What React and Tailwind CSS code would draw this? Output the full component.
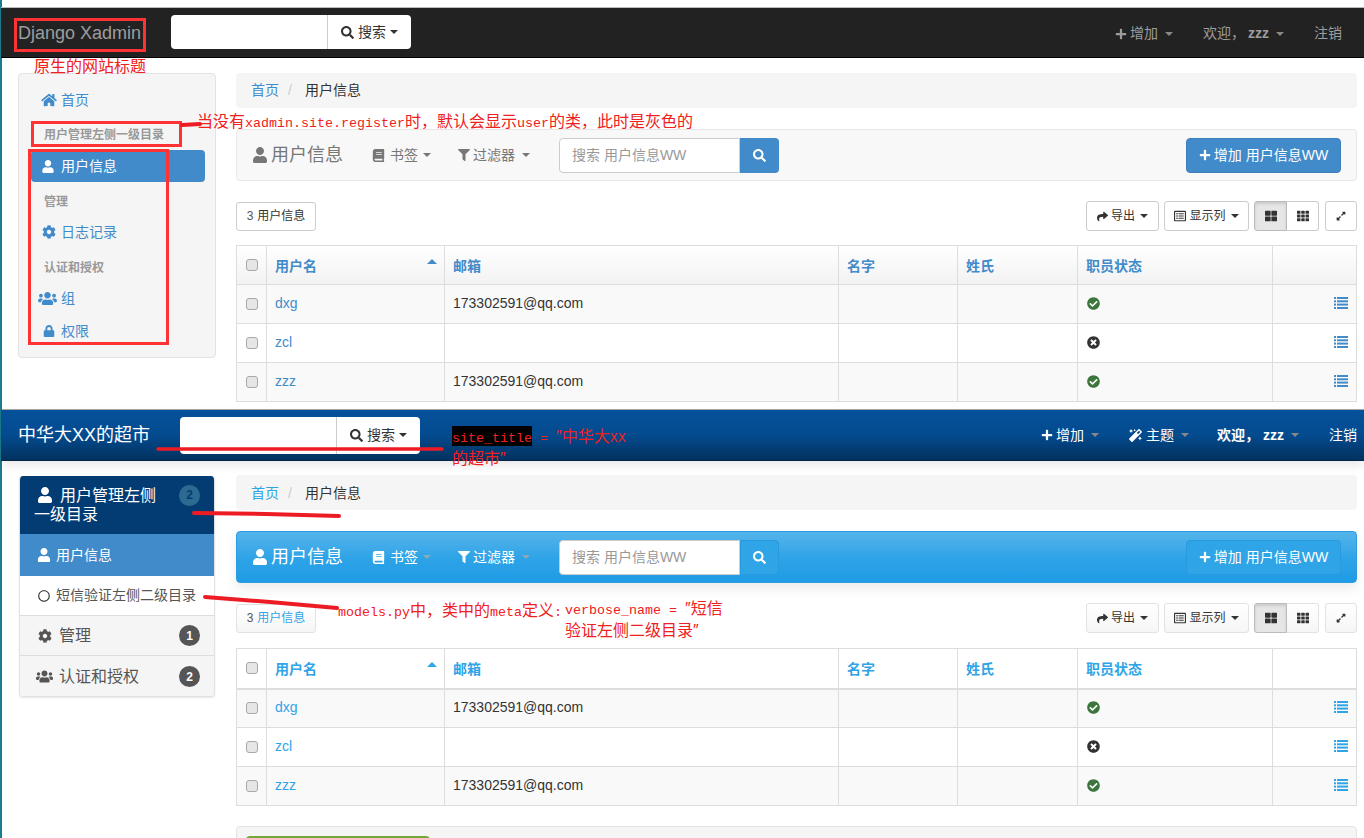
import React from "react";
import {
  FaHome,
  FaUser,
  FaCog,
  FaUsers,
  FaLock,
  FaBook,
  FaFilter,
  FaSearch,
  FaPlus,
  FaShare,
  FaRegListAlt,
  FaThLarge,
  FaTh,
  FaExpandAlt,
  FaCheckCircle,
  FaTimesCircle,
  FaMagic,
  FaRegCircle,
} from "react-icons/fa";

const rows = [
  { name: "dxg", email: "173302591@qq.com", staff: true },
  { name: "zcl", email: "", staff: false },
  { name: "zzz", email: "173302591@qq.com", staff: true },
];

const Caret = ({ className = "border-t-current" }) => (
  <span
    className={`inline-block w-0 h-0 ml-1 align-middle border-x-4 border-t-4 border-x-transparent ${className}`}
  />
);

const Checkbox = () => (
  <span className="block mx-auto w-[12px] h-[12px] rounded-[3px] border border-[#a8a8a8] bg-[#e6e6e6]" />
);

// font awesome 4 list icon, four rows
const ListIcon = () => (
  <svg className="ml-auto" width="14" height="12" viewBox="0 0 14 12" fill="currentColor">
    <rect x="0" y="0" width="2" height="2" />
    <rect x="3" y="0" width="11" height="2" />
    <rect x="0" y="3.3" width="2" height="2" />
    <rect x="3" y="3.3" width="11" height="2" />
    <rect x="0" y="6.6" width="2" height="2" />
    <rect x="3" y="6.6" width="11" height="2" />
    <rect x="0" y="10" width="2" height="2" />
    <rect x="3" y="10" width="11" height="2" />
  </svg>
);

const OutlineBtn = ({ className = "", children, soft }) => (
  <span
    className={`flex items-center justify-center h-[30px] border rounded-[3px] text-[12px] text-[#333] ${
      soft ? "border-[#e2e2e2] bg-linear-to-b from-white to-[#f6f6f6]" : "border-[#ccc] bg-white"
    } ${className}`}
  >
    {children}
  </span>
);

const SearchBox = ({ className }) => (
  <div className={`flex bg-white rounded-[4px] overflow-hidden w-[240px] ${className}`}>
    <div className="w-[157px] border-r border-[#ccc]" />
    <div className="flex-1 flex items-center justify-center gap-1 text-[14px] text-[#333]">
      <FaSearch className="text-[13px]" />
      搜索
      <Caret className="border-t-[#333] !ml-0" />
    </div>
  </div>
);

const NavItem = ({ className, caret, children }) => (
  <span className={`flex items-center gap-[3px] text-[14px] ${className}`}>
    {children}
    {caret && <Caret className="border-t-[#888] ml-[4px]" />}
  </span>
);

const Breadcrumb = ({ linkClass, className = "" }) => (
  <div className={`h-[35px] bg-[#f5f5f5] rounded-[4px] flex items-center px-[15px] text-[14px] ${className}`}>
    <span className={linkClass}>首页</span>
    <span className="text-[#ccc] mx-[9px]">/</span>
    <span className="text-[#333] ml-[4px]">用户信息</span>
  </div>
);

const Toolbar = ({ blue }) => {
  const title = blue ? "text-white" : "text-[#777]";
  const link = blue ? "text-white" : "text-[#777]";
  return (
    <div
      className={`h-[52px] flex items-center border rounded-[4px] pl-[15px] pr-[15px] ${
        blue
          ? "border-[#2d9be0] bg-linear-to-b from-[#54b4eb] via-[#2fa4e7] to-[#1d9ce5] shadow-[0_6px_12px_rgba(0,0,0,0.08)]"
          : "border-[#e7e7e7] bg-[#f8f8f8]"
      }`}
    >
      <span className={`flex items-center gap-[3px] text-[18px] w-[120px] ${title}`}>
        <FaUser className="text-[16px]" />
        用户信息
      </span>
      <span className={`flex items-center gap-[5px] text-[14px] w-[86px] ${link}`}>
        <FaBook className="text-[13px]" />
        书签
        <Caret className={blue ? "border-t-[#8aa9bd] !ml-0" : "border-t-[#777] !ml-0"} />
      </span>
      <span className={`flex items-center gap-[3px] text-[14px] w-[101px] ${link}`}>
        <FaFilter className="text-[12px]" />
        过滤器
        <Caret className={blue ? "border-t-[#8aa9bd]" : "border-t-[#777]"} />
      </span>
      <div className="flex h-[35px] w-[220px]">
        <div className="w-[181px] bg-white border border-[#ccc] rounded-l-[4px] flex items-center pl-[12px] text-[14px] text-[#999]">
          搜索 用户信息WW
        </div>
        <div
          className={`flex-1 flex items-center justify-center text-white text-[13px] rounded-r-[4px] ${
            blue ? "bg-[#2fa4e7] border border-[#2a9ade]" : "bg-[#428bca]"
          }`}
        >
          <FaSearch />
        </div>
      </div>
      <span
        className={`ml-auto w-[155px] h-[35px] flex items-center justify-center gap-[3px] text-white text-[14px] rounded-[4px] border ${
          blue ? "border-[#2a9ade] bg-[#2fa4e7]" : "border-[#3d80bb] bg-[#428bca]"
        }`}
      >
        <FaPlus className="text-[12px]" />
        增加 用户信息WW
      </span>
    </div>
  );
};

const ActionsRow = ({ soft, linkClass }) => (
  <div className="flex items-center h-[30px]">
    <OutlineBtn soft={soft} className="w-[80px] !h-[29px] gap-1">
      <span className="text-[#555]">3</span>
      <span className={linkClass}>用户信息</span>
    </OutlineBtn>
    <div className="ml-auto flex items-center">
      <OutlineBtn soft={soft} className="w-[73px] gap-[3px]">
        <FaShare className="text-[11px]" />
        导出
        <Caret className="border-t-[#333] !ml-[2px]" />
      </OutlineBtn>
      <OutlineBtn soft={soft} className="w-[85px] ml-[5px] gap-[3px]">
        <FaRegListAlt className="text-[12px]" />
        显示列
        <Caret className="border-t-[#333] !ml-[2px]" />
      </OutlineBtn>
      <div className="flex ml-[5px]">
        <span className="w-[33px] h-[30px] flex items-center justify-center border border-[#bbb] rounded-l-[3px] bg-[#e6e6e6] text-[#333] text-[12px] shadow-[inset_0_2px_3px_rgba(0,0,0,0.12)]">
          <FaThLarge />
        </span>
        <OutlineBtn soft={soft} className="w-[32px] !border-l-0 !rounded-l-none">
          <FaTh />
        </OutlineBtn>
      </div>
      <OutlineBtn soft={soft} className="w-[32px] ml-[6px]">
        <FaExpandAlt className="text-[10px]" />
      </OutlineBtn>
    </div>
  </div>
);

const DataTable = ({ linkClass, headClass, headBorder }) => (
  <table className="table-fixed w-[1121px] border border-[#ddd] text-[14px] text-[#333]">
    <colgroup>
      <col className="w-[30px]" />
      <col className="w-[178px]" />
      <col className="w-[394px]" />
      <col className="w-[119px]" />
      <col className="w-[120px]" />
      <col className="w-[195px]" />
      <col />
    </colgroup>
    <thead>
      <tr className={headClass}>
        <th className={`border border-[#ddd] ${headBorder}`}>
          <Checkbox />
        </th>
        <th className={`relative border border-[#ddd] text-left pl-[8px] pt-[2px] font-bold ${headBorder} ${linkClass}`}>
          用户名
          <span className="absolute right-[7px] top-[13px] w-0 h-0 border-x-[5px] border-b-[5px] border-x-transparent border-b-current" />
        </th>
        {["邮箱", "名字", "姓氏", "职员状态", ""].map((h, i) => (
          <th key={i} className={`border border-[#ddd] text-left pl-[8px] pt-[2px] font-bold ${headBorder} ${linkClass}`}>
            {h}
          </th>
        ))}
      </tr>
    </thead>
    <tbody>
      {rows.map((r, i) => (
        <tr key={r.name} className={`h-[39px] ${i % 2 === 0 ? "bg-[#f9f9f9]" : "bg-white"}`}>
          <td className="border border-[#ddd]">
            <Checkbox />
          </td>
          <td className={`border border-[#ddd] pl-[8px] pb-[2px] ${linkClass}`}>{r.name}</td>
          <td className="border border-[#ddd] pl-[8px] pb-[2px]">{r.email}</td>
          <td className="border border-[#ddd]" />
          <td className="border border-[#ddd]" />
          <td className="border border-[#ddd] pl-[9px] pb-[2px]">
            {r.staff ? (
              <FaCheckCircle className="text-[13px] text-[#3c763d]" />
            ) : (
              <FaTimesCircle className="text-[13px] text-[#333]" />
            )}
          </td>
          <td className={`border border-[#ddd] pr-[8px] pb-[2px] ${linkClass}`}>
            <ListIcon />
          </td>
        </tr>
      ))}
    </tbody>
  </table>
);

const PlainSidebar = () => {
  const link = "flex items-center text-[14px] text-[#428bca] pl-[22px]";
  const icon = "w-[16px] mr-[4px] text-[14px] shrink-0";
  const head = "flex items-center pl-[25px] text-[12px] font-bold text-[#999]";
  return (
    <aside className="w-[198px] h-[285px] bg-[#f5f5f5] border border-[#e3e3e3] rounded-[4px] pt-[11px]">
      <div className={`${link} h-[30px]`}>
        <FaHome className={icon} />
        首页
      </div>
      <div className={`${head} h-[20px] mt-[10px]`}>用户管理左侧一级目录</div>
      <div className="flex items-center ml-[12px] mt-[5px] w-[174px] h-[32px] bg-[#428bca] rounded-[4px] pl-[10px] text-white text-[14px]">
        <FaUser className="w-[14px] mr-[6px] text-[13px] shrink-0" />
        用户信息
      </div>
      <div className={`${head} h-[20px] mt-[10px]`}>管理</div>
      <div className={`${link} h-[30px] mt-[5px]`}>
        <FaCog className={icon} />
        日志记录
      </div>
      <div className={`${head} h-[20px] mt-[11px]`}>认证和授权</div>
      <div className={`${link} h-[30px] mt-[5px]`}>
        <FaUsers className="!w-[19px] !h-[15px] shrink-0 -ml-[3px] mr-[4px]" />
        组
      </div>
      <div className={`${link} h-[30px] mt-[3px]`}>
        <FaLock className="!w-[12px] !h-[12px] shrink-0 ml-[2px] mr-[6px]" />
        权限
      </div>
    </aside>
  );
};

const Badge = ({ className, children }) => (
  <span
    className={`absolute right-[14px] w-[21px] h-[21px] rounded-full flex items-center justify-center text-[12px] font-bold ${className}`}
  >
    {children}
  </span>
);

const MenuSidebar = () => (
  <aside className="w-[196px] ml-[1px] mt-[1px] h-[221px] rounded-[4px] overflow-hidden border border-[#e2e2e2] border-t-0 shadow-[0_1px_2px_rgba(0,0,0,0.1)]">
    <div className="relative h-[58px] bg-[#033c73] text-white text-[16px] leading-[19px] pl-[14px] pr-[48px] pt-[10px]">
      <FaUser className="inline-block text-[16px] ml-[3px] mr-[7px] align-[-2px]" />
      用户管理左侧一级目录
      <Badge className="top-[9px] bg-[#2d6a91] text-[#033c73]">2</Badge>
    </div>
    <div className="flex items-center h-[42px] bg-[#428bca] text-white text-[14px] pl-[18px]">
      <FaUser className="text-[14px] mr-[5px] -ml-[1px]" />
      用户信息
    </div>
    <div className="flex items-center h-[40px] bg-white text-[14px] text-[#555] pl-[18px] border-b border-[#ddd]">
      <FaRegCircle className="text-[12px] text-[#333] mr-[6px]" />
      短信验证左侧二级目录
    </div>
    <div className="relative flex items-center h-[40px] bg-[#f5f5f5] text-[16px] text-[#555] pl-[18px] border-b border-[#ddd]">
      <FaCog className="text-[14px] mr-[7px]" />
      管理
      <Badge className="top-[9px] bg-[#555] text-white">1</Badge>
    </div>
    <div className="relative flex items-center h-[41px] bg-[#f5f5f5] text-[16px] text-[#555] pl-[16px]">
      <FaUsers className="text-[17px] mr-[6px]" />
      认证和授权
      <Badge className="top-[10px] bg-[#555] text-white">2</Badge>
    </div>
  </aside>
);

const Latin = ({ children }) => (
  <span className="text-[13.33px] whitespace-pre font-['Liberation_Mono',monospace]">{children}</span>
);

const Note = ({ className, children }) => (
  <div className={`absolute text-[16px] leading-[20px] whitespace-nowrap text-[#f02020] ${className}`}>
    {children}
  </div>
);

const RedBox = ({ className }) => (
  <div className={`absolute border-[3px] border-[#ff3333] ${className}`} />
);

export default function App() {
  return (
    <div className="relative flex w-[1364px] h-[838px] overflow-hidden bg-white font-['Liberation_Sans','Noto_Sans_CJK_SC',sans-serif]">
      <div className="w-[2px] shrink-0 bg-[#1b7c8e]" />
      <div className="flex-1 min-w-0">
        {/* first screenshot: default theme */}
        <section className="h-[409px] pt-[7px]">
          <header className="h-[51px] -ml-[1px] pt-[2px] flex items-center border-t border-t-[#bbb] border-b border-b-black bg-[#222]">
            <span className="ml-[17px] w-[153px] text-[18px] text-[#9d9d9d]">Django Xadmin</span>
            <SearchBox className="h-[34px] -mt-[3px]" />
            <div className="ml-auto flex items-center pr-[22px] text-[#9d9d9d]">
              <NavItem caret className="text-[#9d9d9d]">
                <FaPlus className="text-[12px]" />
                增加
              </NavItem>
              <NavItem caret className="ml-[30px] text-[#9d9d9d]">
                欢迎， <b>zzz</b>
              </NavItem>
              <NavItem className="ml-[30px] text-[#9d9d9d]">注销</NavItem>
            </div>
          </header>
          <div className="flex pl-[16px] pt-[15px] gap-[20px]">
            <PlainSidebar />
            <main className="w-[1121px]">
              <Breadcrumb linkClass="text-[#428bca]" />
              <div className="mt-[21px]">
                <Toolbar />
              </div>
              <div className="mt-[20px]">
                <ActionsRow linkClass="text-[#333]" />
              </div>
              <div className="mt-[14px]">
                <DataTable
                  linkClass="text-[#428bca]"
                  headClass="h-[39px] bg-linear-to-b from-white to-[#f2f2f2]"
                  headBorder=""
                />
              </div>
            </main>
          </div>
        </section>

        {/* second screenshot: blue theme */}
        <section className="border-t border-t-[#aaa]">
          <header className="h-[51px] -ml-[1px] flex items-center border-b border-b-[#02264a] bg-linear-to-b from-[#04519b] via-[#044b8f] to-[#02325f] shadow-[0_4px_10px_rgba(0,0,0,0.1)]">
            <span className="ml-[17px] w-[162px] text-[18px] text-white">中华大XX的超市</span>
            <SearchBox className="h-[37px]" />
            <div className="ml-auto flex items-center pr-[7px] text-white">
              <NavItem caret>
                <FaPlus className="text-[12px]" />
                增加
              </NavItem>
              <NavItem caret className="ml-[30px]">
                <FaMagic className="text-[13px] mr-[1px]" />
                主题
              </NavItem>
              <NavItem caret className="ml-[28px] font-bold">
                欢迎， zzz
              </NavItem>
              <NavItem className="ml-[30px]">注销</NavItem>
            </div>
          </header>
          <div className="flex pl-[16px] pt-[14px] gap-[21px]">
            <MenuSidebar />
            <main className="w-[1121px]">
              <Breadcrumb linkClass="text-[#2fa4e7]" className="pt-[1px]" />
              <div className="mt-[21px]">
                <Toolbar blue />
              </div>
              <div className="mt-[20px]">
                <ActionsRow soft linkClass="text-[#2fa4e7]" />
              </div>
              <div className="mt-[15px]">
                <DataTable
                  linkClass="text-[#2fa4e7]"
                  headClass="h-[40px] bg-white"
                  headBorder="border-b-2 border-b-[#ddd]"
                />
              </div>
              <div className="mt-[20px] h-[60px] border border-[#e3e3e3] rounded-[4px] bg-[#f5f5f5] pl-[9px] pt-[9px]">
                <div className="w-[184px] h-[34px] rounded-[4px] bg-[#73a839]" />
              </div>
            </main>
          </div>
        </section>
      </div>

      {/* annotations drawn over the screenshots */}
      <RedBox className="left-[14px] top-[18px] w-[132px] h-[34px]" />
      <RedBox className="left-[31px] top-[121px] w-[151px] h-[26px]" />
      <RedBox className="left-[28px] top-[149px] w-[141px] h-[196px]" />
      <Note className="left-[34px] top-[57px]">原生的网站标题</Note>
      <Note className="left-[197px] top-[112px]">
        当没有<Latin>xadmin.site.register</Latin>时，默认会显示<Latin>user</Latin>的类，此时是灰色的
      </Note>
      <div className="absolute left-[452px] top-[426px] w-[80px] h-[20px] bg-black" />
      <Note className="left-[452px] top-[427px]">
        <Latin>site_title = </Latin>″中华大<Latin>XX</Latin>
        <br />
        的超市″
      </Note>
      <Note className="left-[338px] top-[601px]">
        <Latin>models.py</Latin>中，类中的<Latin>meta</Latin>定义<Latin>:</Latin>
      </Note>
      <Note className="left-[565px] top-[599px]">
        <Latin>verbose_name = </Latin>″短信
        <br />
        验证左侧二级目录″
      </Note>
      <svg className="absolute left-0 top-0 pointer-events-none" width="1364" height="838" fill="none" stroke="#ed1c24" strokeLinecap="round">
        <path d="M182 125 L200 124" strokeWidth="4" />
        <path d="M158 449 L442 449" strokeWidth="3.5" />
        <path d="M194 513 L266 514 L339 516" strokeWidth="4" />
        <path d="M205 597 L270 602 L337 608" strokeWidth="4" />
      </svg>
    </div>
  );
}
